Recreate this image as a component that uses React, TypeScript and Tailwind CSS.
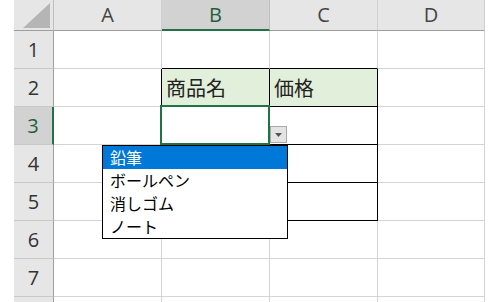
import React from "react";

const COLS = ["A", "B", "C", "D"];
const ROWS = [1, 2, 3, 4, 5, 6, 7, 8];

const jp = { fontFamily: '"Noto Sans CJK JP", "Noto Sans", sans-serif' };
const hdr = { fontFamily: '"Open Sans", "Noto Sans CJK JP", sans-serif' };

function inTable(r: number, c: number) {
  return r >= 2 && r <= 5 && (c === 1 || c === 2);
}

function Cell({ r, c }: { r: number; c: number }) {
  const rightBlack = inTable(r, c) || inTable(r, c + 1);
  const bottomBlack = inTable(r, c) || inTable(r + 1, c);
  const green = r === 2 && (c === 1 || c === 2);
  const text = r === 2 && c === 1 ? "商品名" : r === 2 && c === 2 ? "価格" : "";
  const selected = r === 3 && c === 1;
  return (
    <div
      className={
        "relative border-r border-b h-full flex items-center px-[4px] text-[20px] text-[#222] " +
        (rightBlack ? "border-r-black " : "border-r-[#d4d4d4] ") +
        (bottomBlack ? "border-b-black " : "border-b-[#d4d4d4] ") +
        (green ? "bg-[#e2efda]" : "bg-white")
      }
      style={jp}
    >
      {text}
      {selected && (
        <>
          <div className="absolute -left-[2px] -top-[2px] -right-[1px] -bottom-[1px] border-2 border-[#217346] pointer-events-none" />
          <div className="absolute right-[-18px] bottom-[1px] w-[17px] h-[17px] bg-[#e4e4e4] border border-[#a9a9a9] flex items-center justify-center z-10">
            <svg width="7" height="4" viewBox="0 0 7 4">
              <path d="M0 0 H7 L3.5 4 Z" fill="#555" />
            </svg>
          </div>
        </>
      )}
    </div>
  );
}

export default function App() {
  return (
    <div className="relative w-[500px] h-[302px] bg-white overflow-hidden">
      <div className="grid grid-cols-[14px_40px_108px_108px_108px_107px_1fr] grid-rows-[31px_repeat(8,38px)]">
        {/* header row */}
        <div className="bg-white" />
        <div className="relative bg-[#e6e6e6] border-r border-b border-r-[#bdbdbd] border-b-[#9e9e9e]">
          <svg className="absolute left-[9px] top-[2px]" width="28" height="26" viewBox="0 0 28 26">
            <path d="M0 26 L27 1 L27 26 Z" fill="#b5b5b5" />
          </svg>
        </div>
        {COLS.map((c, i) => (
          <div
            key={c}
            className={
              "flex items-center justify-center text-[20px] border-r " +
              (i === 1
                ? "bg-[#d2d2d2] text-[#1d5e3b] border-b-2 border-b-[#217346] border-r-[#bdbdbd]"
                : "bg-[#e6e6e6] text-[#444] border-b border-b-[#9e9e9e] border-r-[#cfcfcf]")
            }
            style={hdr}
          >
            {c}
          </div>
        ))}
        <div className="bg-white" />
        {ROWS.map((r) => (
          <React.Fragment key={r}>
            <div className="bg-white" />
            <div
              className={
                "flex items-center justify-center text-[20px] border-b border-b-[#c8c8c8] " +
                (r === 3
                  ? "bg-[#d2d2d2] text-[#1d5e3b] border-r-2 border-r-[#217346]"
                  : "bg-[#e6e6e6] text-[#333] border-r border-r-[#9e9e9e]")
              }
              style={hdr}
            >
              {r < 8 ? r : ""}
            </div>
            {COLS.map((_, ci) => (
              <Cell key={ci} r={r} c={ci} />
            ))}
            <div className="bg-white" />
          </React.Fragment>
        ))}
      </div>

      {/* dropdown list */}
      <div
        className="absolute left-[102px] top-[145px] w-[186px] bg-white border border-black flex flex-col text-[16px] leading-[23px] text-black z-20"
        style={jp}
      >
        <div className="bg-[#0078d7] text-white px-[7px]">鉛筆</div>
        <div className="px-[7px]">ボールペン</div>
        <div className="px-[7px]">消しゴム</div>
        <div className="px-[7px]">ノート</div>
      </div>
    </div>
  );
}
